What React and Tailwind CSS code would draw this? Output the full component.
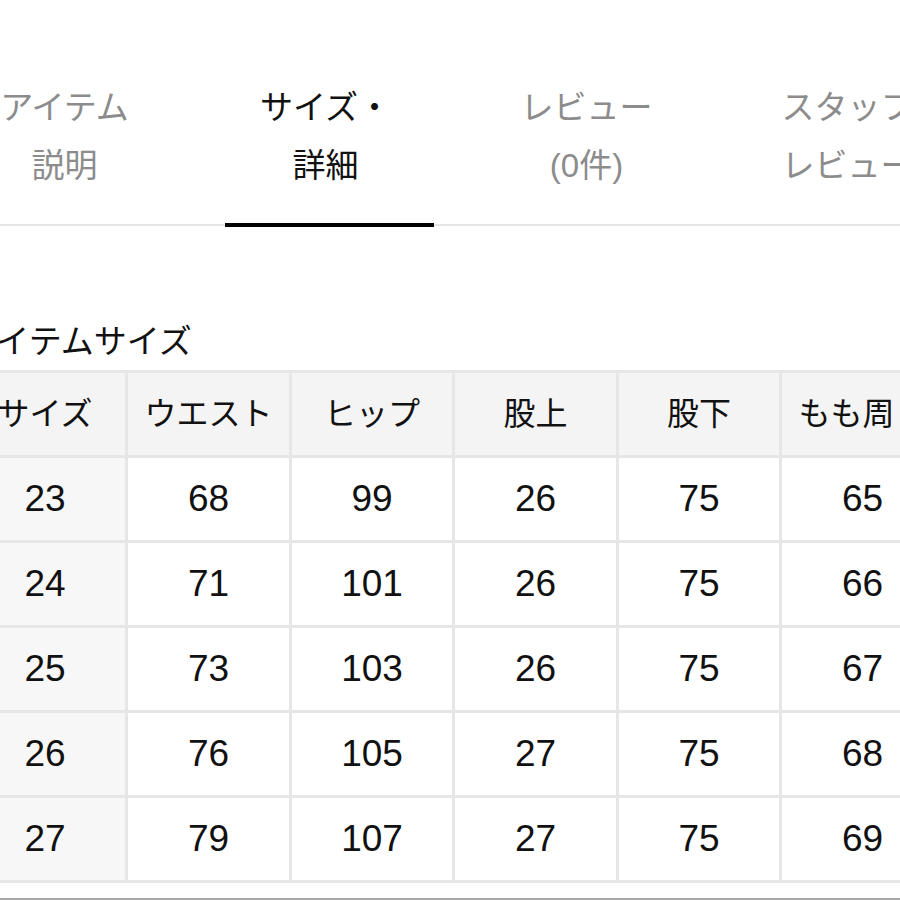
import React from "react";

const FONT = { fontFamily: '"Liberation Sans", "Noto Sans CJK JP", sans-serif' };

const tabs = [
  { l1: "アイテム", l2: "説明", active: false },
  { l1: "サイズ・", l2: "詳細", active: true },
  { l1: "レビュー", l2: "(0件)", active: false },
  { l1: "スタッフ", l2: "レビュー", active: false },
];

const headers = ["サイズ", "ウエスト", "ヒップ", "股上", "股下", "もも周り"];
const rows = [
  ["23", "68", "99", "26", "75", "65"],
  ["24", "71", "101", "26", "75", "66"],
  ["25", "73", "103", "26", "75", "67"],
  ["26", "76", "105", "27", "75", "68"],
  ["27", "79", "107", "27", "75", "69"],
];

export default function App() {
  return (
    <div className="w-[900px] h-[900px] overflow-hidden bg-white" style={FONT}>
      <div className="flex border-b-2 border-[#e6e6e6] ml-[-66px] w-[1100px]">
        {tabs.map((t, i) => (
          <div
            key={i}
            className={
              "relative w-[261px] shrink-0 h-[224px] pt-[79px] text-center text-[33px] leading-[58px] " +
              (t.active ? "text-[#111]" : "text-[#8c8c8c]")
            }
          >
            <div>{t.l1}</div>
            <div>{t.l2}</div>
            {t.active && (
              <div className="absolute left-[30px] right-[22px] bottom-[-3px] h-[4px] bg-black" />
            )}
          </div>
        ))}
      </div>

      <div className="mt-[96px] ml-[-35px] text-[33px] leading-[40px] text-[#111] whitespace-nowrap">
        アイテムサイズ
      </div>

      <div className="mt-[8px] ml-[-38px] w-max grid grid-cols-[160px_161px_160px_161px_160px_161px] gap-[3px] p-[3px] bg-[#e6e6e6]">
        {headers.map((h, i) => (
          <div
            key={"h" + i}
            className="h-[82px] bg-[#f4f4f4] flex items-center justify-center text-[32px] text-[#111] whitespace-nowrap"
          >
            {h}
          </div>
        ))}
        {rows.map((r, ri) =>
          r.map((v, ci) => (
            <div
              key={ri + "-" + ci}
              className={
                "h-[82px] flex items-center justify-center text-[37px] text-[#111] " +
                (ci === 0 ? "bg-[#f7f7f7]" : "bg-white")
              }
            >
              {v}
            </div>
          ))
        )}
      </div>

      <div className="mt-[15px] h-[2px] bg-[#a8a8a8]" />
    </div>
  );
}
